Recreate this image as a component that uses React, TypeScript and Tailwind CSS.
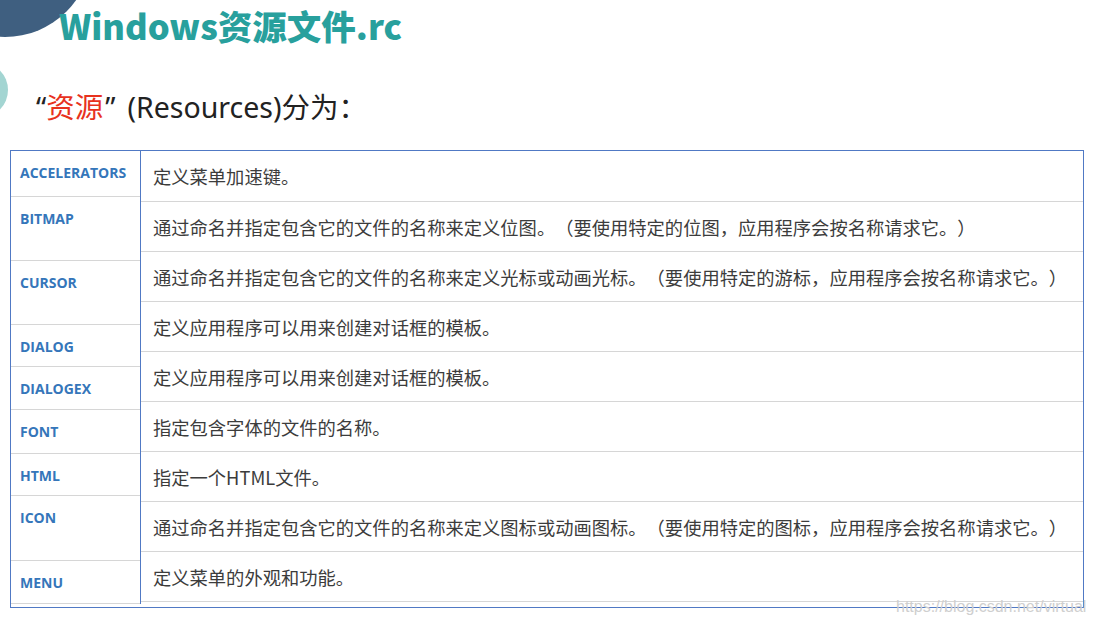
const left = [
  { name: "ACCELERATORS", h: "h-[46px]" },
  { name: "BITMAP", h: "h-[64px]" },
  { name: "CURSOR", h: "h-[64px]" },
  { name: "DIALOG", h: "h-[42px]" },
  { name: "DIALOGEX", h: "h-[43px]" },
  { name: "FONT", h: "h-[44px]" },
  { name: "HTML", h: "h-[42px]" },
  { name: "ICON", h: "h-[65px]" },
  { name: "MENU", h: "h-[43px]" },
];

const right = [
  "定义菜单加速键。",
  "通过命名并指定包含它的文件的名称来定义位图。（要使用特定的位图，应用程序会按名称请求它。）",
  "通过命名并指定包含它的文件的名称来定义光标或动画光标。（要使用特定的游标，应用程序会按名称请求它。）",
  "定义应用程序可以用来创建对话框的模板。",
  "定义应用程序可以用来创建对话框的模板。",
  "指定包含字体的文件的名称。",
  "指定一个HTML文件。",
  "通过命名并指定包含它的文件的名称来定义图标或动画图标。（要使用特定的图标，应用程序会按名称请求它。）",
  "定义菜单的外观和功能。",
];

const cjk = "font-['Noto_Sans_CJK_SC','Noto_Sans',sans-serif]";

export default function App() {
  return (
    <div className="relative h-[627px] w-[1097px] overflow-hidden bg-white">
      {/* decorative circles */}
      <div className="absolute left-[-82px] top-[-137px] h-[174px] w-[174px] rounded-full bg-[#3f5f80]" />
      <div className="absolute left-[-48px] top-[62px] h-[56px] w-[56px] rounded-full bg-[#a3d5d2]" />

      <div className="relative flex flex-col">
        <h1 className={`ml-[59px] pt-[5px] text-[34.5px] font-[800] leading-[40px] text-[#28a09d] ${cjk}`}>
          Windows资源文件.rc
        </h1>
        <p className="ml-[36px] mt-[44px] font-['Noto_Sans','Noto_Sans_CJK_SC',sans-serif] text-[28.5px] leading-[36px] text-[#222]">
          “<span className="text-[#e8321e]">资源</span>
          <span className="ml-[2px] mr-[12px]">”</span>(Resources)分为：
        </p>

        <div className="ml-[10px] mt-[25px] flex w-[1074px] border-[1.5px] border-[#5079c4] pb-[3px]">
          <div className="flex w-[130px] shrink-0 flex-col border-r-[1.5px] border-[#5079c4]">
            {left.map((r) => (
              <div
                key={r.name}
                className={`${r.h} border-b-[1.5px] border-[#d6d6d6] pl-[9px] pt-[14px] font-['Open_Sans',sans-serif] text-[14px] font-bold leading-[16px] text-[#3576ba]`}
              >
                {r.name}
              </div>
            ))}
          </div>
          <div className="flex flex-1 flex-col">
            {right.map((t, i) => (
              <div
                key={i}
                className={`flex ${i === 0 ? "h-[51px]" : "h-[50px]"} items-center border-b-[1.5px] border-[#d6d6d6] pl-[12px] text-[18.3px] leading-[24px] text-[#3c3c3c] [text-spacing-trim:space-all] ${cjk}`}
              >
                {t}
              </div>
            ))}
          </div>
        </div>
      </div>

      <div className="absolute left-[896px] top-[597px] font-['Liberation_Sans',sans-serif] text-[16px] leading-[20px] text-[#cfcfcf]">
        https://blog.csdn.net/virtual
      </div>
    </div>
  );
}
